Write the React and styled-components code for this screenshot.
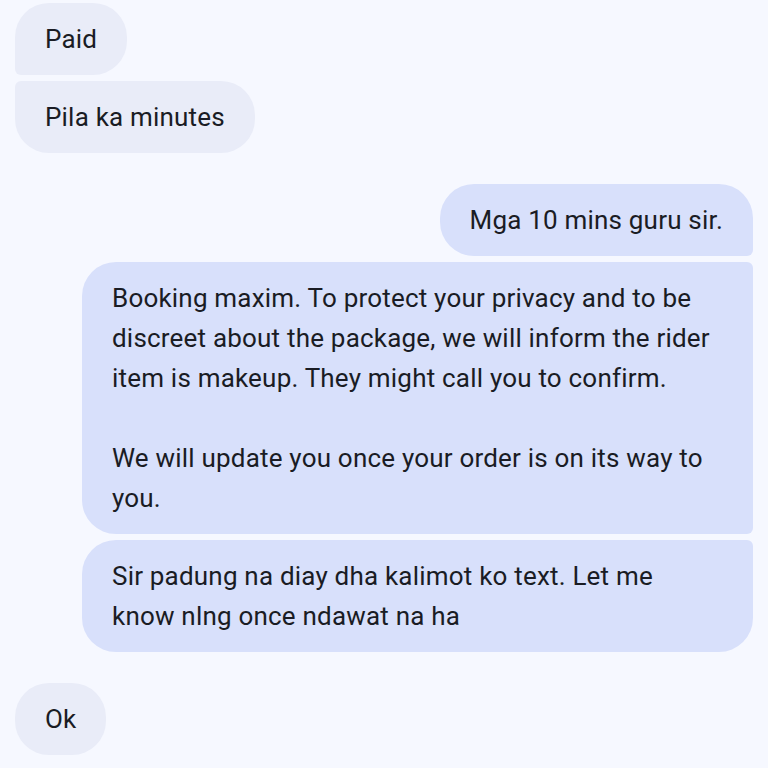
import styled, { createGlobalStyle } from 'styled-components';

const GlobalStyle = createGlobalStyle`
	html, body {
		margin: 0;
		padding: 0;
		background: #f6f8ff;
	}
	body {
		font-family: Roboto, 'Liberation Sans', sans-serif;
		color: #1a1c24;
	}
`;

const messages = [
	{ id: 1, side: 'in', group: 1, text: 'Paid' },
	{ id: 2, side: 'in', group: 1, text: 'Pila ka minutes' },
	{ id: 3, side: 'out', group: 2, text: 'Mga 10 mins guru sir.' },
	{
		id: 4,
		side: 'out',
		group: 2,
		wide: true,
		text: 'Booking maxim. To protect your privacy and to be\ndiscreet about the package, we will inform the rider\nitem is makeup. They might call you to confirm.\n\nWe will update you once your order is on its way to\nyou.',
	},
	{
		id: 5,
		side: 'out',
		group: 2,
		wide: true,
		text: 'Sir padung na diay dha kalimot ko text. Let me\nknow nlng once ndawat na ha',
	},
	{ id: 6, side: 'in', group: 3, text: 'Ok' },
];

const BIG = 34;
const SMALL = 6;

// rounded outer corners, tight corners where bubbles of one sender touch
const corners = (side, first, last) => {
	if (side === 'in') {
		return `${first ? BIG : SMALL}px ${BIG}px ${BIG}px ${last ? BIG : SMALL}px`;
	}
	return `${BIG}px ${first ? BIG : SMALL}px ${last ? BIG : SMALL}px ${BIG}px`;
};

const App = () => {
	const groups = [];
	messages.forEach((m) => {
		const g = groups.find((x) => x.id === m.group);
		if (g) g.items.push(m);
		else groups.push({ id: m.group, side: m.side, items: [m] });
	});

	return (
		<>
			<GlobalStyle />
			<Thread>
				{groups.map((g) => (
					<Group key={g.id} $side={g.side}>
						{g.items.map((m, i) => (
							<Bubble
								key={m.id}
								$side={m.side}
								$wide={m.wide}
								$radius={corners(m.side, i === 0, i === g.items.length - 1)}
							>
								{m.text}
							</Bubble>
						))}
					</Group>
				))}
			</Thread>
		</>
	);
};

const Thread = styled.main`
	display: flex;
	flex-direction: column;
	gap: 31px;
	padding: 3px 15px 10px;
	min-height: 768px;
	box-sizing: border-box;
`;

const Group = styled.section`
	display: flex;
	flex-direction: column;
	gap: 6px;
	align-items: ${(p) => (p.$side === 'out' ? 'flex-end' : 'flex-start')};
`;

const Bubble = styled.div`
	box-sizing: border-box;
	max-width: 671px;
	width: ${(p) => (p.$wide ? '671px' : 'auto')};
	padding: 16px 30px;
	border-radius: ${(p) => p.$radius};
	background: ${(p) => (p.$side === 'out' ? '#d8e0fb' : '#e9ecf8')};
	font-size: 26px;
	letter-spacing: 0.2px;
	line-height: 40px;
	white-space: pre-line;
`;

export default App;
